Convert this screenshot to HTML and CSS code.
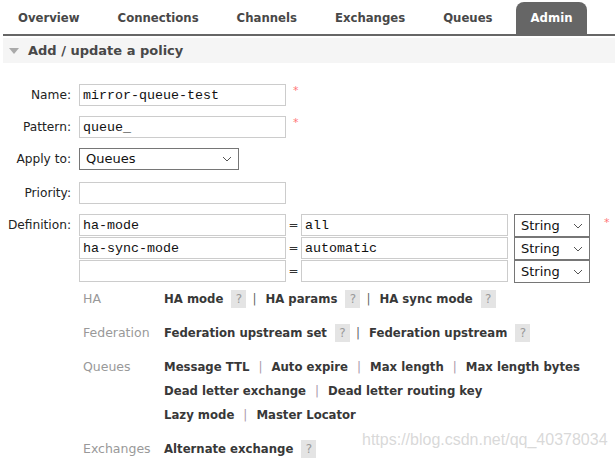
FILE: index.html
```html
<!DOCTYPE html>
<html>
<head>
<meta charset="utf-8">
<link rel="stylesheet" href="styles.css">
</head>
<body>
<ul class="tabs">
  <li class="tab">Overview</li>
  <li class="tab">Connections</li>
  <li class="tab">Channels</li>
  <li class="tab">Exchanges</li>
  <li class="tab">Queues</li>
  <li class="tab active">Admin</li>
</ul>
<div class="section-head"><span class="tri"></span>Add / update a policy</div>
<div class="form">
  <div class="row">
    <label class="lbl">Name:</label>
    <div class="field"><input class="txt" type="text" value="mirror-queue-test"><span class="req">*</span></div>
  </div>
  <div class="row">
    <label class="lbl">Pattern:</label>
    <div class="field"><input class="txt" type="text" value="queue_"><span class="req">*</span></div>
  </div>
  <div class="row row-apply">
    <label class="lbl">Apply to:</label>
    <div class="field"><div class="sel sel-apply">Queues<svg class="chev" viewBox="0 0 10 6"><path d="M1 1l4 4 4-4" fill="none" stroke="#555" stroke-width="1"/></svg></div></div>
  </div>
  <div class="row">
    <label class="lbl">Priority:</label>
    <div class="field"><input class="txt" type="text" value=""></div>
  </div>
  <div class="row row-def">
    <label class="lbl">Definition:</label>
    <div class="defs">
      <div class="def">
        <input class="txt" type="text" value="ha-mode"><span class="eq">=</span><input class="txt" type="text" value="all"><div class="sel sel-type">String<svg class="chev" viewBox="0 0 10 6"><path d="M1 1l4 4 4-4" fill="none" stroke="#555" stroke-width="1"/></svg></div><span class="req req-def">*</span>
      </div>
      <div class="def">
        <input class="txt" type="text" value="ha-sync-mode"><span class="eq">=</span><input class="txt" type="text" value="automatic"><div class="sel sel-type">String<svg class="chev" viewBox="0 0 10 6"><path d="M1 1l4 4 4-4" fill="none" stroke="#555" stroke-width="1"/></svg></div>
      </div>
      <div class="def">
        <input class="txt" type="text" value=""><span class="eq">=</span><input class="txt" type="text" value=""><div class="sel sel-type">String<svg class="chev" viewBox="0 0 10 6"><path d="M1 1l4 4 4-4" fill="none" stroke="#555" stroke-width="1"/></svg></div>
      </div>
    </div>
  </div>
  <div class="help">
    <div class="hgroup">
      <div class="hlabel">HA</div>
      <div class="hlinks">
        <div class="hline"><span class="lk">HA mode</span><span class="q">?</span><span class="sep">|</span><span class="lk">HA params</span><span class="q">?</span><span class="sep">|</span><span class="lk">HA sync mode</span><span class="q">?</span></div>
      </div>
    </div>
    <div class="hgroup">
      <div class="hlabel">Federation</div>
      <div class="hlinks">
        <div class="hline"><span class="lk">Federation upstream set</span><span class="q">?</span><span class="sep">|</span><span class="lk">Federation upstream</span><span class="q">?</span></div>
      </div>
    </div>
    <div class="hgroup">
      <div class="hlabel">Queues</div>
      <div class="hlinks">
        <div class="hline"><span class="lk">Message TTL</span><span class="sep sep-l">|</span><span class="lk">Auto expire</span><span class="sep sep-l">|</span><span class="lk">Max length</span><span class="sep sep-l">|</span><span class="lk">Max length bytes</span></div>
        <div class="hline"><span class="lk">Dead letter exchange</span><span class="sep sep-l">|</span><span class="lk">Dead letter routing key</span></div>
        <div class="hline"><span class="lk">Lazy mode</span><span class="sep sep-l">|</span><span class="lk">Master Locator</span></div>
      </div>
    </div>
    <div class="hgroup">
      <div class="hlabel">Exchanges</div>
      <div class="hlinks">
        <div class="hline"><span class="lk">Alternate exchange</span><span class="q">?</span></div>
      </div>
    </div>
  </div>
</div>
<div class="watermark">https://blog.csdn.net/qq_40378034</div>
</body>
</html>
```
FILE: styles.css
```css
html, body {
  margin: 0;
  padding: 0;
  background: #fff;
  font-family: "DejaVu Sans", Verdana, sans-serif;
  font-size: 12px;
  color: #222;
}
body {
  position: relative;
  height: 459px;
  overflow: hidden;
}
.tabs {
  list-style: none;
  margin: 0 0 0 3px;
  padding: 2px 0 0 0;
  display: flex;
  gap: 8px;
  border-bottom: 2px solid #666;
  height: 32px;
}
.tab {
  padding: 0 15px;
  height: 32px;
  line-height: 33px;
  font-weight: bold;
  font-size: 11.7px;
  color: #484848;
  border-radius: 8px 8px 0 0;
}
.tab.active {
  background: #666;
  color: #fff;
}
.section-head {
  margin: 2px 0 0 3px;
  height: 25px;
  line-height: 25px;
  background: #f5f5f5;
  font-weight: bold;
  font-size: 13px;
  color: #484848;
  display: flex;
  align-items: center;
}
.tri {
  width: 0;
  height: 0;
  border-left: 5px solid transparent;
  border-right: 5px solid transparent;
  border-top: 6px solid #aaa;
  margin: 0 9px 0 6px;
}
.form {
  padding-top: 21px;
}
.row {
  display: flex;
  align-items: flex-start;
  margin-bottom: 10px;
}
.row-apply {
  margin-bottom: 12px;
}
.lbl {
  width: 71px;
  text-align: right;
  padding-right: 8px;
  font-size: 12.2px;
  line-height: 22px;
  height: 22px;
  color: #222;
  flex: none;
}
.field {
  display: flex;
  align-items: flex-start;
}
.txt {
  box-sizing: border-box;
  width: 207px;
  height: 22px;
  border: 1px solid #ccc;
  padding: 0 3px;
  margin: 0;
  font-family: "Liberation Mono", "Courier New", monospace;
  font-size: 13.33px;
  color: #111;
  background: #fff;
  outline: none;
}
.req {
  color: #f77;
  font-size: 11px;
  margin-left: 7px;
  line-height: 14px;
}
.sel {
  box-sizing: border-box;
  height: 22px;
  border: 1px solid #767676;
  font-size: 13px;
  line-height: 20px;
  padding-left: 6px;
  color: #111;
  display: flex;
  align-items: center;
  justify-content: space-between;
  background: #fff;
}
.sel-apply {
  width: 160px;
}
.chev {
  width: 10px;
  height: 6px;
  margin-right: 6px;
}
.sel-type {
  width: 76px;
  height: 23px;
  margin-left: 6px;
}
.defs {
  display: flex;
  flex-direction: column;
}
.def {
  display: flex;
  align-items: flex-start;
  height: 23px;
}
.eq {
  width: 15px;
  text-align: center;
  line-height: 22px;
  font-size: 12px;
  color: #333;
}
.req-def {
  margin-left: 14px;
  margin-top: 2px;
}
.help {
  padding-left: 83px;
  margin-top: -3px;
}
.hgroup {
  display: flex;
  margin-bottom: 13px;
}
.hlabel {
  width: 81px;
  flex: none;
  color: #999;
  font-size: 12.5px;
  line-height: 18px;
}
.hline {
  display: flex;
  align-items: center;
  height: 24px;
  margin-top: -3px;
}
.hlinks .hline + .hline {
  margin-top: 0;
}
.lk {
  font-weight: bold;
  font-size: 11.7px;
  color: #383838;
}
.q {
  display: inline-block;
  width: 15px;
  height: 18px;
  line-height: 18px;
  background: #e4e4e4;
  color: #999;
  text-align: center;
  margin-left: 8px;
  font-size: 12px;
}
.sep {
  color: #666;
  margin: 0 9px 0 6px;
}
.sep-l {
  color: #a9a;
  margin: 0 9px 0 9px;
}
.watermark {
  position: absolute;
  left: 362px;
  top: 431px;
  font-family: "Liberation Sans", Arial, sans-serif;
  font-size: 16px;
  color: rgba(200, 200, 200, 0.7);
  white-space: nowrap;
}
```
